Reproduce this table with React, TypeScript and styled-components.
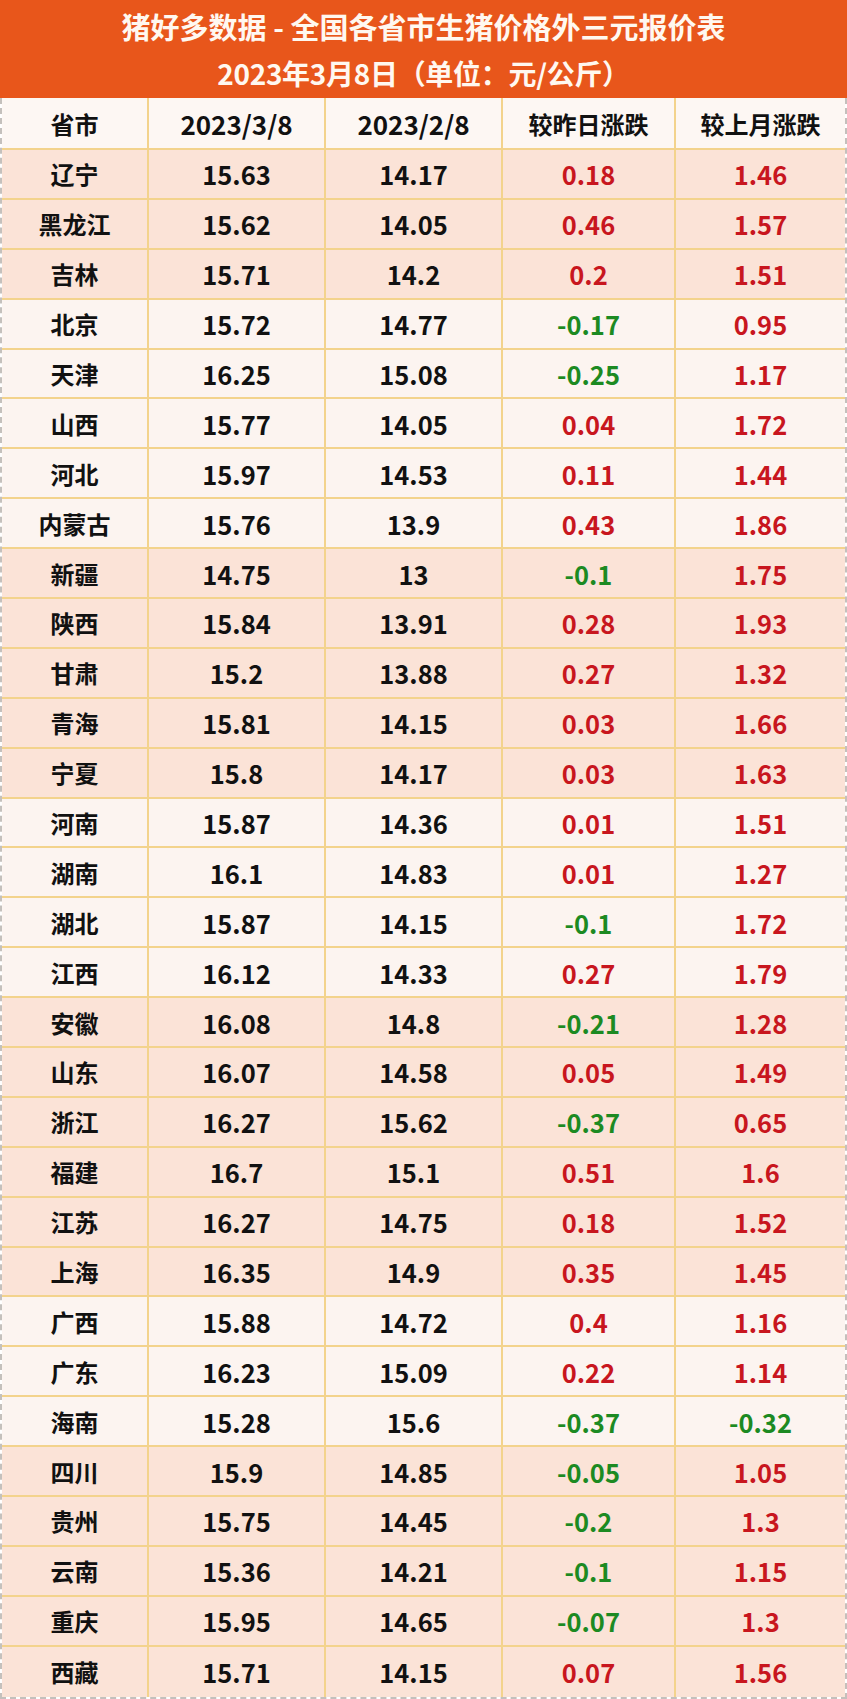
import React from "react";
import styled, { createGlobalStyle } from "styled-components";

type Row = [string, string, string, string, string];

// regions alternate between the peach and the pale tone
const groups: { tone: "peach" | "pale"; rows: Row[] }[] = [
  {
    tone: "peach",
    rows: [
      ["辽宁", "15.63", "14.17", "0.18", "1.46"],
      ["黑龙江", "15.62", "14.05", "0.46", "1.57"],
      ["吉林", "15.71", "14.2", "0.2", "1.51"],
    ],
  },
  {
    tone: "pale",
    rows: [
      ["北京", "15.72", "14.77", "-0.17", "0.95"],
      ["天津", "16.25", "15.08", "-0.25", "1.17"],
      ["山西", "15.77", "14.05", "0.04", "1.72"],
      ["河北", "15.97", "14.53", "0.11", "1.44"],
      ["内蒙古", "15.76", "13.9", "0.43", "1.86"],
    ],
  },
  {
    tone: "peach",
    rows: [
      ["新疆", "14.75", "13", "-0.1", "1.75"],
      ["陕西", "15.84", "13.91", "0.28", "1.93"],
      ["甘肃", "15.2", "13.88", "0.27", "1.32"],
      ["青海", "15.81", "14.15", "0.03", "1.66"],
      ["宁夏", "15.8", "14.17", "0.03", "1.63"],
    ],
  },
  {
    tone: "pale",
    rows: [
      ["河南", "15.87", "14.36", "0.01", "1.51"],
      ["湖南", "16.1", "14.83", "0.01", "1.27"],
      ["湖北", "15.87", "14.15", "-0.1", "1.72"],
      ["江西", "16.12", "14.33", "0.27", "1.79"],
    ],
  },
  {
    tone: "peach",
    rows: [
      ["安徽", "16.08", "14.8", "-0.21", "1.28"],
      ["山东", "16.07", "14.58", "0.05", "1.49"],
      ["浙江", "16.27", "15.62", "-0.37", "0.65"],
      ["福建", "16.7", "15.1", "0.51", "1.6"],
      ["江苏", "16.27", "14.75", "0.18", "1.52"],
      ["上海", "16.35", "14.9", "0.35", "1.45"],
    ],
  },
  {
    tone: "pale",
    rows: [
      ["广西", "15.88", "14.72", "0.4", "1.16"],
      ["广东", "16.23", "15.09", "0.22", "1.14"],
      ["海南", "15.28", "15.6", "-0.37", "-0.32"],
    ],
  },
  {
    tone: "peach",
    rows: [
      ["四川", "15.9", "14.85", "-0.05", "1.05"],
      ["贵州", "15.75", "14.45", "-0.2", "1.3"],
      ["云南", "15.36", "14.21", "-0.1", "1.15"],
      ["重庆", "15.95", "14.65", "-0.07", "1.3"],
      ["西藏", "15.71", "14.15", "0.07", "1.56"],
    ],
  },
];

const headers = ["省市", "2023/3/8", "2023/2/8", "较昨日涨跌", "较上月涨跌"];

const changeOf = (v: string) => (v.startsWith("-") ? "down" : "up");

const App: React.FC = () => {
  return (
    <>
      <GlobalStyle />
      <Sheet>
        <TitleBar>
          <Title>猪好多数据 - 全国各省市生猪价格外三元报价表</Title>
          <Subtitle>2023年3月8日（单位：元/公斤）</Subtitle>
        </TitleBar>
        <Grid>
          {headers.map((h, i) => (
            <HeadCell key={h} $numeric={i === 1 || i === 2}>
              {h}
            </HeadCell>
          ))}
          {groups.map((g) =>
            g.rows.map((r) => (
              <React.Fragment key={r[0]}>
                <Cell $tone={g.tone}>{r[0]}</Cell>
                <Cell $tone={g.tone} $numeric>
                  {r[1]}
                </Cell>
                <Cell $tone={g.tone} $numeric>
                  {r[2]}
                </Cell>
                <Cell $tone={g.tone} $numeric $change={changeOf(r[3])}>
                  {r[3]}
                </Cell>
                <Cell $tone={g.tone} $numeric $change={changeOf(r[4])}>
                  {r[4]}
                </Cell>
              </React.Fragment>
            ))
          )}
        </Grid>
      </Sheet>
    </>
  );
};

export default App;

const GlobalStyle = createGlobalStyle`
  * {
    box-sizing: border-box;
  }
  body {
    margin: 0;
    background: #ffffff;
    font-family: "Noto Sans CJK SC", "Noto Sans", sans-serif;
  }
`;

const Sheet = styled.div`
  width: 847px;
  display: flex;
  flex-direction: column;
`;

const TitleBar = styled.div`
  height: 98px;
  background-color: #e8561b;
  color: #fff8f0;
  display: flex;
  flex-direction: column;
  align-items: center;
  justify-content: center;
`;

const Title = styled.h1`
  margin: 0;
  font-size: 29px;
  font-weight: 700;
  line-height: 48px;
`;

const Subtitle = styled.h2`
  margin: 0;
  font-size: 28px;
  font-weight: 700;
  line-height: 46px;
  letter-spacing: -0.3px;
`;

const Grid = styled.div`
  display: grid;
  grid-template-columns: 147px 177px 177px 173px 1fr;
  border-left: 2px dashed #c4c0bc;
  border-right: 2px dashed #c4c0bc;
  border-bottom: 2px dashed #c4c0bc;
`;

const HeadCell = styled.div<{ $numeric?: boolean }>`
  height: 52px;
  display: flex;
  align-items: center;
  justify-content: center;
  background-color: #fdf7f3;
  border-bottom: 2px solid #f3d38c;
  border-right: 2px solid #f3d38c;
  font-size: ${(p) => (p.$numeric ? "26px" : "24px")};
  font-weight: 700;
  color: #111111;

  &:nth-child(5n) {
    border-right: none;
  }
`;

const Cell = styled.div<{
  $tone: "peach" | "pale";
  $numeric?: boolean;
  $change?: "up" | "down";
}>`
  height: 49.9px;
  display: flex;
  align-items: center;
  justify-content: center;
  background-color: ${(p) => (p.$tone === "peach" ? "#fbe3d7" : "#fcf4f0")};
  border-bottom: 2px solid #f3d38c;
  border-right: 2px solid #f3d38c;
  font-size: ${(p) => (p.$numeric ? "25.5px" : "24px")};
  font-weight: 700;
  color: ${(p) =>
    p.$change === "up" ? "#c8161e" : p.$change === "down" ? "#1c8a22" : "#111111"};

  &:nth-child(5n) {
    border-right: none;
  }
  &:nth-last-child(-n + 5) {
    border-bottom: none;
  }
`;
